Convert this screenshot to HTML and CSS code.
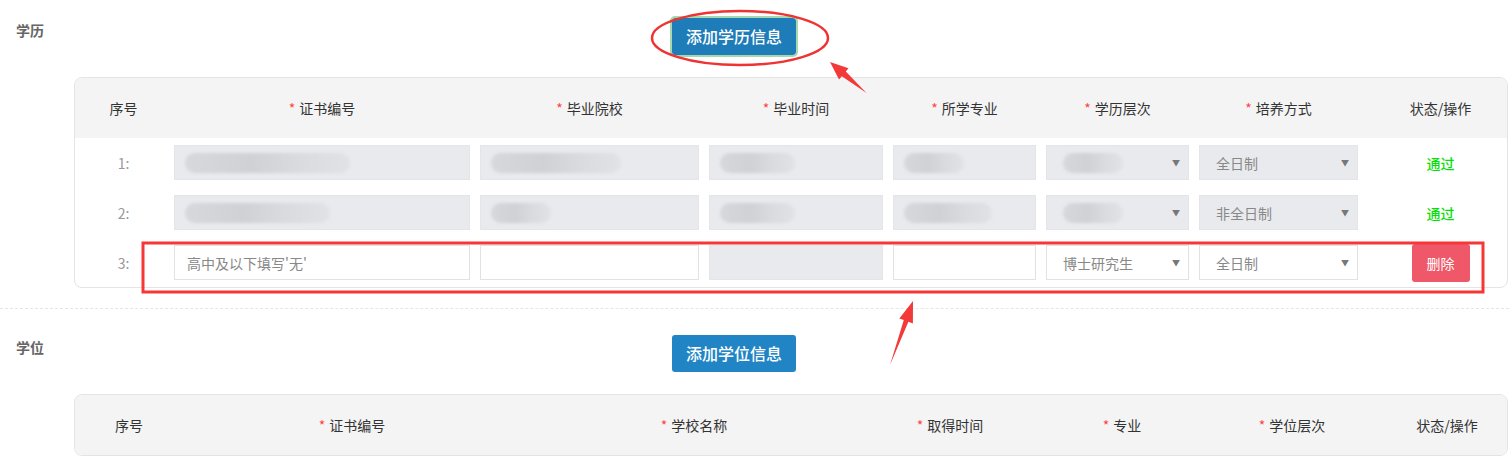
FILE: index.html
```html
<!DOCTYPE html>
<html lang="zh-CN">

<head>
    <meta charset="UTF-8">
    <meta name="viewport" content="width=device-width, initial-scale=1.0">
    <title>学历学位</title>
    <link rel="stylesheet" href="styles.css">
</head>

<body>
    <div class="page">

        <!-- 学历 -->
        <section class="block block--first">
            <div class="block__head">
                <span class="block__label">学历</span>
                <button class="btn is-focus">添加学历信息</button>
            </div>
            <div class="card">
                <div class="grid card__head">
                    <div class="col-idx">序号</div>
                    <div><i>*</i>证书编号</div>
                    <div><i>*</i>毕业院校</div>
                    <div><i>*</i>毕业时间</div>
                    <div><i>*</i>所学专业</div>
                    <div><i>*</i>学历层次</div>
                    <div><i>*</i>培养方式</div>
                    <div class="col-status">状态/操作</div>
                </div>
                <div class="card__body">
                    <div class="grid row">
                        <div class="col-idx">1:</div>
                        <div class="field is-disabled"><span class="smudge" style="width:165px"></span></div>
                        <div class="field is-disabled"><span class="smudge" style="width:130px"></span></div>
                        <div class="field is-disabled"><span class="smudge" style="width:75px"></span></div>
                        <div class="field is-disabled"><span class="smudge" style="width:60px"></span></div>
                        <div class="field select is-disabled"><span class="smudge" style="width:60px"></span></div>
                        <div class="field select is-disabled">全日制</div>
                        <div class="col-status pass">通过</div>
                    </div>
                    <div class="grid row">
                        <div class="col-idx">2:</div>
                        <div class="field is-disabled"><span class="smudge" style="width:145px"></span></div>
                        <div class="field is-disabled"><span class="smudge" style="width:60px"></span></div>
                        <div class="field is-disabled"><span class="smudge" style="width:75px"></span></div>
                        <div class="field is-disabled"><span class="smudge" style="width:88px"></span></div>
                        <div class="field select is-disabled"><span class="smudge" style="width:60px"></span></div>
                        <div class="field select is-disabled">非全日制</div>
                        <div class="col-status pass">通过</div>
                    </div>
                    <div class="grid row">
                        <div class="col-idx">3:</div>
                        <div class="field placeholder">高中及以下填写'无'</div>
                        <div class="field"></div>
                        <div class="field is-disabled"></div>
                        <div class="field"></div>
                        <div class="field select">博士研究生</div>
                        <div class="field select">全日制</div>
                        <div class="col-status"><button class="btn-del">删除</button></div>
                    </div>
                </div>
            </div>
        </section>

        <div class="divider"></div>

        <!-- 学位 -->
        <section class="block">
            <div class="block__head">
                <span class="block__label">学位</span>
                <button class="btn">添加学位信息</button>
            </div>
            <div class="card">
                <div class="grid grid--degree card__head">
                    <div>序号</div>
                    <div><i>*</i>证书编号</div>
                    <div><i>*</i>学校名称</div>
                    <div><i>*</i>取得时间</div>
                    <div><i>*</i>专业</div>
                    <div><i>*</i>学位层次</div>
                    <div class="col-status">状态/操作</div>
                </div>
            </div>
        </section>

        <!-- annotation marks drawn over the screenshot -->
        <svg class="marks" width="1509" height="475" viewBox="0 0 1509 475">
            <ellipse cx="740" cy="38" rx="88" ry="27" fill="none" stroke="#ef3333" stroke-width="2.5" />
            <polygon fill="#f23a3a" points="830,62 848.5,68.3 845.8,71.6 866.5,93 841.8,76.3 839,79.4" />
            <rect x="143" y="243" width="1340" height="49" fill="none" stroke="#f73636" stroke-width="3" />
            <polygon fill="#f23a3a" points="913,301 912.9,323.4 908.4,321.8 890,365 903.8,320.1 899.3,318.6" />
        </svg>
    </div>
</body>

</html>
```

FILE: styles.css
```css
*,
*::before,
*::after {
    box-sizing: border-box;
}

body {
    margin: 0;
    font-family: "Noto Sans CJK SC", "Liberation Sans", sans-serif;
    font-size: 14px;
    color: #333;
    background: #fff;
}

.page {
    position: relative;
    width: 1509px;
    height: 475px;
    overflow: hidden;
}

/* section */
.block {
    padding-top: 26px;
}

.block--first {
    padding-top: 18px;
}

.block__head {
    display: flex;
    align-items: flex-start;
    margin-bottom: 22px;
}

.block__label {
    width: 672px;
    padding-left: 16px;
    margin-top: 2px;
    line-height: 20px;
    font-size: 14px;
    font-weight: bold;
    color: #666;
}

.btn {
    height: 37px;
    padding: 0 14px;
    border: none;
    border-radius: 3px;
    background: #2185c5;
    color: #fff;
    font-family: inherit;
    font-size: 16px;
    font-weight: 500;
    line-height: 37px;
}

.btn.is-focus {
    background: #1e7cb9;
    outline: 2px solid #a6d8ad;
}

/* card */
.card {
    margin-left: 74px;
    margin-right: 1px;
    border: 1px solid #e4e4e4;
    border-radius: 8px;
    overflow: hidden;
}

.grid {
    display: grid;
    grid-template-columns: 89px 296px 219px 174px 143px 143px 159px 1fr;
    column-gap: 10px;
    align-items: center;
}

.grid--degree {
    grid-template-columns: 108px 338px 346px 166px 178px 162px 1fr;
    column-gap: 0;
}

.card__head {
    height: 60px;
    background: #f4f4f4;
    text-align: center;
    line-height: 20px;
}

.card__head i {
    font-style: normal;
    color: #f44;
    margin-right: 4px;
}

.col-idx {
    text-align: center;
    padding-left: 8px;
}

.col-status {
    text-align: center;
    padding-left: 6px;
}

.grid--degree .col-status {
    padding-left: 14px;
}

.card__body {
    padding: 7px 0 7px;
}

.row {
    grid-auto-rows: 35px;
    height: 35px;
    margin-bottom: 15px;
    color: #999;
}

.row:last-child {
    margin-bottom: 0;
}

/* inputs */
.field {
    display: flex;
    align-items: center;
    height: 35px;
    padding: 0 8px 0 16px;
    border: 1px solid #e2e2e2;
    background: #fff;
    color: #888;
}

.field.is-disabled {
    background: #e8eaed;
    border-color: #e3e5e8;
    padding-left: 10px;
}

.field.placeholder {
    padding-left: 12px;
}

.select {
    justify-content: space-between;
}

.select.is-disabled {
    padding-left: 16px;
}

.select::after {
    content: "▼";
    font-size: 8px;
    color: #777;
    margin-left: auto;
}

.smudge {
    display: inline-block;
    height: 20px;
    border-radius: 10px;
    background: linear-gradient(90deg, #d6d8db, #cfd1d4 40%, #d9dbde 70%, #e0e2e5);
    filter: blur(1.5px);
}

.pass {
    color: #06df06;
    font-weight: 500;
}

.btn-del {
    height: 38px;
    width: 58px;
    margin-top: 1px;
    border: none;
    border-radius: 3px;
    background: #ef5868;
    color: #fff;
    font-family: inherit;
    font-size: 14px;
}

/* divider */
.divider {
    margin-top: 20px;
    border-top: 1px dashed #e6e6e6;
}

.marks {
    position: absolute;
    top: 0;
    left: 0;
    pointer-events: none;
}
```
